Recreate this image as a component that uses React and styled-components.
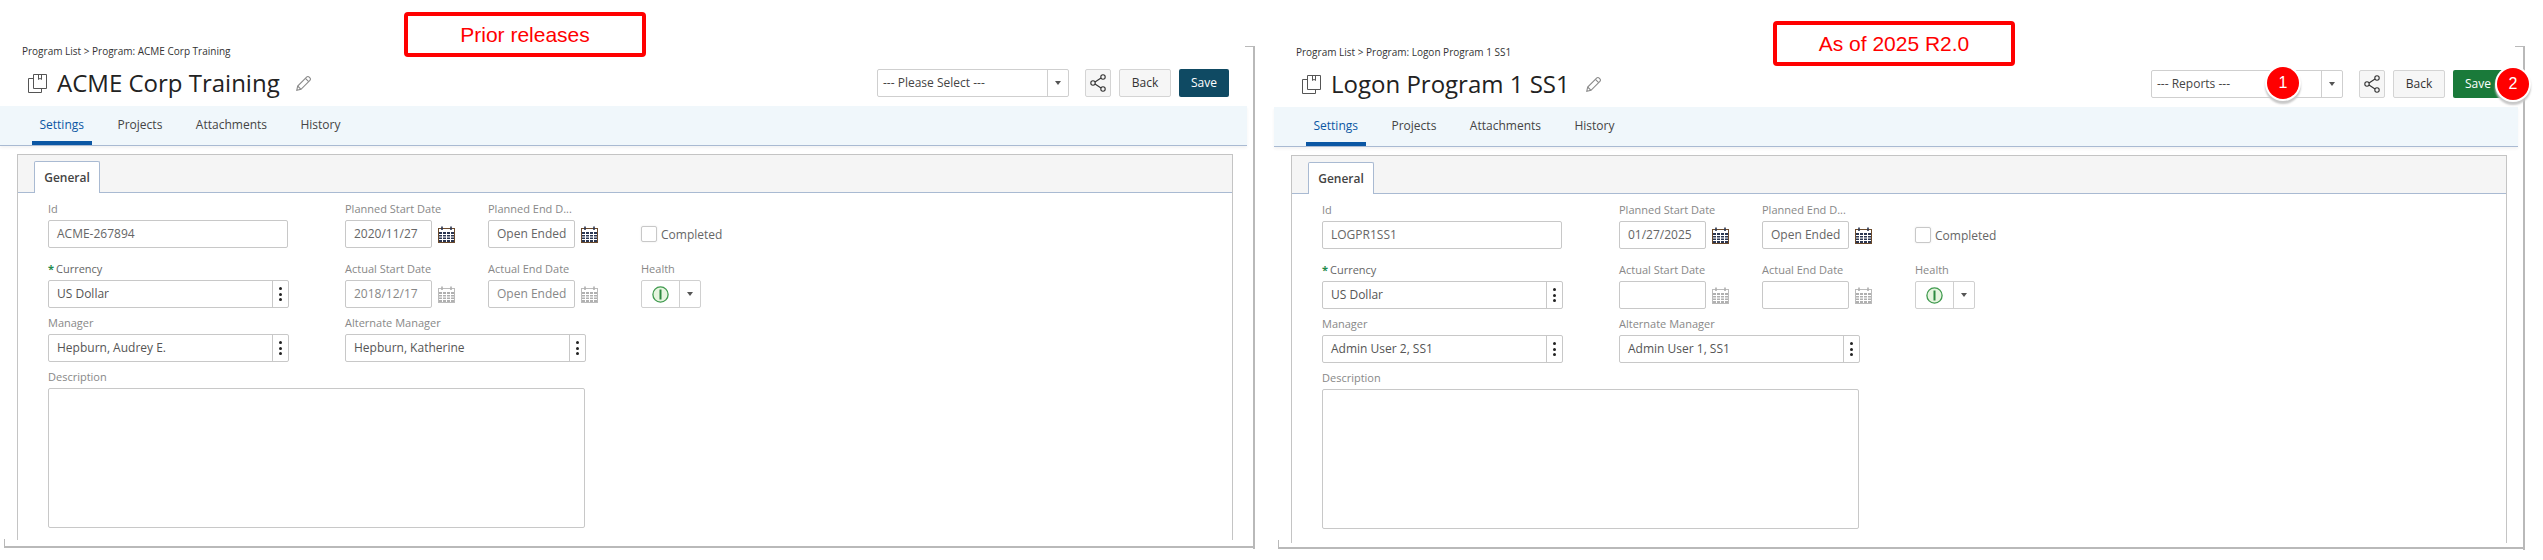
import styled, { createGlobalStyle } from 'styled-components'

const GlobalStyle = createGlobalStyle`
  html, body {
    margin: 0;
    padding: 0;
    background: #fff;
  }
  body {
    font-family: "Open Sans", "Liberation Sans", sans-serif;
    overflow: hidden;
  }
  * {
    box-sizing: border-box;
  }
`

function BookIcon() {
  return (
    <svg width="21" height="21" viewBox="0 0 21 21" fill="none" stroke="#555" strokeWidth="1">
      <path d="M6.5 1.5h13v14h-13z" />
      <path d="M6.5 5.5h-5v14h13v-4" />
      <path d="M11.5 1.5v5l1.5-1.2 1.5 1.2v-5" />
    </svg>
  )
}

function PencilIcon() {
  return (
    <svg width="17" height="17" viewBox="0 0 17 17" fill="none" stroke="#8a8a8a" strokeWidth="1.1">
      <path d="M1.8 15.2l.9-4.2L11.6 2.1a1.8 1.8 0 0 1 2.6 0l.7.7a1.8 1.8 0 0 1 0 2.6L6 14.3z" />
      <path d="M2.7 11l3.3 3.3M10.4 3.3l3.3 3.3" />
    </svg>
  )
}

function CalendarIcon({ muted }) {
  const ink = muted ? '#b0b0b0' : '#2a3550'
  const rim = muted ? '#bcbcbc' : '#6b4a2c'
  return (
    <svg width="17" height="17" viewBox="0 0 17 17" fill="none">
      <rect x="0.5" y="2.5" width="16" height="14" fill="#fff" stroke={rim} />
      <rect x="1" y="6" width="15" height="10" fill={ink} />
      <path d="M1 8.5h15M1 11h15M1 13.5h15M4.5 6v10M8.5 6v10M12.5 6v10" stroke="#fff" strokeWidth="1" />
      <path d="M4 0.5v3.5M13 0.5v3.5" stroke={ink} strokeWidth="1.6" />
    </svg>
  )
}

function ShareIcon() {
  return (
    <svg width="16" height="18" viewBox="0 0 16 18" fill="none" stroke="#333" strokeWidth="1.1">
      <circle cx="3" cy="9" r="2.2" />
      <circle cx="13" cy="3" r="2.2" />
      <circle cx="13" cy="15" r="2.2" />
      <path d="M5 8l6-4M5 10l6 4" />
    </svg>
  )
}

function HealthIcon() {
  return (
    <svg width="17" height="17" viewBox="0 0 17 17">
      <circle cx="8.5" cy="8.5" r="7.6" fill="#e6f5df" stroke="#3f9a4e" strokeWidth="1.3" />
      <rect x="7.5" y="3.5" width="2" height="10" fill="#2d8a40" />
    </svg>
  )
}

function Field({ label, required, children, span }) {
  return (
    <FieldBox $span={span}>
      <FieldLabel $required={required}>
        {required && <Star>*</Star>}
        {label}
      </FieldLabel>
      {children}
    </FieldBox>
  )
}

function Combo({ value }) {
  return (
    <ComboBox>
      <ComboValue>{value}</ComboValue>
      <Kebab>
        <i />
        <i />
        <i />
      </Kebab>
    </ComboBox>
  )
}

function DateField({ value, muted }) {
  return (
    <DateRow>
      <DateInput $muted={muted}>{value}</DateInput>
      <CalendarIcon muted={muted} />
    </DateRow>
  )
}

function ProgramPanel({ data }) {
  return (
    <Frame $width={data.frameWidth} $height={data.frameHeight} $pad={data.framePad}>
      <Inner $top={data.top}>
        <Breadcrumb>{data.crumb}</Breadcrumb>
        <HeaderRow $right={data.barInset}>
          <TitleWrap>
            <BookIcon />
            <Title>{data.title}</Title>
            <PencilIcon />
          </TitleWrap>
          <Toolbar>
            <SelectBox $width={data.selectWidth}>
              <SelectValue>{data.select}</SelectValue>
              <SelectArrow>
                <Caret />
              </SelectArrow>
            </SelectBox>
            <ShareButton>
              <ShareIcon />
            </ShareButton>
            <BackButton>Back</BackButton>
            <SaveButton $color={data.saveColor}>Save</SaveButton>
          </Toolbar>
        </HeaderRow>
        <TabBand>
          <TabLink $active>Settings</TabLink>
          <TabLink>Projects</TabLink>
          <TabLink>Attachments</TabLink>
          <TabLink>History</TabLink>
        </TabBand>
        <ContentBox $height={data.boxHeight}>
          <BoxHeader>
            <BoxTab>General</BoxTab>
          </BoxHeader>
          <FormGrid>
            <Field label="Id">
              <TextInput>{data.id}</TextInput>
            </Field>
            <Field label="Planned Start Date">
              <DateField value={data.plannedStart} />
            </Field>
            <Field label="Planned End D...">
              <DateField value="Open Ended" />
            </Field>
            <CheckRow>
              <CheckBox />
              Completed
            </CheckRow>

            <Field label="Currency" required>
              <Combo value="US Dollar" />
            </Field>
            <Field label="Actual Start Date">
              <DateField value={data.actualStart} muted />
            </Field>
            <Field label="Actual End Date">
              <DateField value={data.actualEnd} muted />
            </Field>
            <Field label="Health">
              <HealthBox>
                <HealthCell>
                  <HealthIcon />
                </HealthCell>
                <HealthArrow>
                  <Caret />
                </HealthArrow>
              </HealthBox>
            </Field>

            <Field label="Manager">
              <Combo value={data.manager} />
            </Field>
            <Field label="Alternate Manager" span={2}>
              <Combo value={data.altManager} />
            </Field>
            <Spacer />

            <Field label="Description" span={3}>
              <TextArea />
            </Field>
          </FormGrid>
        </ContentBox>
      </Inner>
    </Frame>
  )
}

const prior = {
  frameWidth: 1255,
  frameHeight: 502,
  framePad: 8,
  top: 0,
  barInset: 18,
  boxHeight: 386,
  selectWidth: 192,
  crumb: 'Program List > Program: ACME Corp Training',
  title: 'ACME Corp Training',
  select: '--- Please Select ---',
  saveColor: '#0f4a63',
  id: 'ACME-267894',
  plannedStart: '2020/11/27',
  actualStart: '2018/12/17',
  actualEnd: 'Open Ended',
  manager: 'Hepburn, Audrey E.',
  altManager: 'Hepburn, Katherine',
}

const current = {
  frameWidth: 1251,
  frameHeight: 503,
  framePad: 7,
  top: 1,
  barInset: 15,
  boxHeight: 388,
  selectWidth: 192,
  crumb: 'Program List > Program: Logon Program 1 SS1',
  title: 'Logon Program 1 SS1',
  select: '--- Reports ---',
  saveColor: '#1a7a3a',
  id: 'LOGPR1SS1',
  plannedStart: '01/27/2025',
  actualStart: '',
  actualEnd: '',
  manager: 'Admin User 2, SS1',
  altManager: 'Admin User 1, SS1',
}

function App() {
  return (
    <Page>
      <GlobalStyle />
      <ProgramPanel data={prior} />
      <ProgramPanel data={current} />
      <Callout $left={404} $top={12}>Prior releases</Callout>
      <Callout $left={1773} $top={21}>As of 2025 R2.0</Callout>
      <Badge $left={2267} $top={67}>1</Badge>
      <Badge $left={2497} $top={68}>2</Badge>
    </Page>
  )
}

const Page = styled.div`
  position: relative;
  display: flex;
  gap: 19px;
  width: 2543px;
  height: 560px;
  padding-top: 46px;
  background: #fff;
`

const Frame = styled.div`
  position: relative;
  flex: none;
  width: ${(p) => p.$width}px;
  height: ${(p) => p.$height}px;
  padding-right: ${(p) => p.$pad}px;

  &::before {
    content: '';
    position: absolute;
    top: 0;
    right: 0;
    width: 8px;
    height: 100%;
    border-top: 1px solid #b9b9b9;
    border-right: 2px solid #b9b9b9;
  }

  &::after {
    content: '';
    position: absolute;
    left: 4px;
    right: 0;
    bottom: 0;
    height: 7px;
    border-left: 1px solid #b9b9b9;
    border-bottom: 2px solid #b9b9b9;
  }
`

const Inner = styled.div`
  padding-top: ${(p) => p.$top}px;
`

const Breadcrumb = styled.div`
  height: 10px;
  padding-left: 22px;
  font-size: 10px;
  line-height: 10px;
  color: #333;
`

const HeaderRow = styled.div`
  display: flex;
  align-items: center;
  justify-content: space-between;
  height: 28px;
  margin: 13px 0 9px;
  padding: 0 ${(p) => p.$right}px 0 27px;
`

const TitleWrap = styled.div`
  display: flex;
  align-items: center;
`

const Title = styled.h1`
  margin: 0 15px 0 9px;
  font-size: 24px;
  font-weight: 400;
  line-height: 28px;
  color: #222;
  white-space: nowrap;
`

const Toolbar = styled.div`
  display: flex;
  align-items: stretch;
  height: 28px;
`

const SelectBox = styled.div`
  display: flex;
  width: ${(p) => p.$width}px;
  margin-right: 16px;
  background: #fff;
  border: 1px solid #cfcfcf;
  border-radius: 2px;
`

const SelectValue = styled.div`
  flex: 1;
  padding-left: 5px;
  font-size: 12px;
  line-height: 26px;
  color: #444;
`

const SelectArrow = styled.div`
  display: flex;
  align-items: center;
  justify-content: center;
  width: 21px;
  border-left: 1px solid #cfcfcf;
`

const Caret = styled.span`
  width: 0;
  height: 0;
  border-left: 3.5px solid transparent;
  border-right: 3.5px solid transparent;
  border-top: 4px solid #555;
`

const ShareButton = styled.div`
  display: flex;
  align-items: center;
  justify-content: center;
  width: 26px;
  margin-right: 8px;
  background: #f6f6f6;
  border: 1px solid #d4d4d4;
  border-radius: 2px;
`

const BackButton = styled.div`
  width: 52px;
  margin-right: 8px;
  font-size: 12px;
  line-height: 25px;
  text-align: center;
  color: #333;
  background: #f6f6f6;
  border: 1px solid #d4d4d4;
  border-radius: 2px;
`

const SaveButton = styled.div`
  width: 50px;
  font-size: 12px;
  line-height: 27px;
  text-align: center;
  color: #fff;
  background: ${(p) => p.$color};
  border-radius: 2px;
`

const TabBand = styled.div`
  display: flex;
  gap: 18.5px;
  height: 40px;
  padding-left: 32px;
  background: #f0f7fb;
  border-bottom: 1px solid #a9bad2;
  box-shadow: 0 2px 3px rgba(0, 0, 0, 0.05);
`

const TabLink = styled.div`
  height: 39px;
  padding: 0 7.5px;
  font-size: 12px;
  line-height: 38px;
  color: ${(p) => (p.$active ? '#0b57a4' : '#444')};
  border-bottom: 4px solid ${(p) => (p.$active ? '#0b57a4' : 'transparent')};
`

const ContentBox = styled.div`
  width: 1216px;
  height: ${(p) => p.$height}px;
  margin: 8px 0 0 17px;
  border: 1px solid #c4c4c4;
  border-bottom: none;
`

const BoxHeader = styled.div`
  display: flex;
  align-items: flex-end;
  height: 38px;
  padding-left: 16px;
  background: #f5f5f5;
  border-bottom: 1px solid #a9bad2;
`

const BoxTab = styled.div`
  width: 66px;
  height: 32px;
  margin-bottom: -1px;
  font-size: 12px;
  font-weight: 600;
  line-height: 32px;
  text-align: center;
  color: #444;
  background: #fff;
  border: 1px solid #a9bad2;
  border-bottom: none;
  border-radius: 2px 2px 0 0;
`

const FormGrid = styled.div`
  display: grid;
  grid-template-columns: 297px 143px 153px 1fr;
  grid-template-rows: 60px 54px 54px auto;
  padding: 10px 0 0 30px;
`

const FieldBox = styled.div`
  grid-column: span ${(p) => p.$span || 1};
`

const FieldLabel = styled.div`
  height: 12px;
  margin-bottom: 5px;
  font-size: 11px;
  line-height: 12px;
  color: ${(p) => (p.$required ? '#666' : '#888')};
  white-space: nowrap;
`

const Star = styled.span`
  margin-right: 2px;
  font-weight: 700;
  color: #1f8a4c;
`

const inputBase = `
  height: 28px;
  font-size: 12px;
  line-height: 26px;
  background: #fff;
  border: 1px solid #c8c8c8;
  border-radius: 2px;
`

const TextInput = styled.div`
  ${inputBase}
  width: 240px;
  padding-left: 8px;
  color: #666;
`

const ComboBox = styled.div`
  ${inputBase}
  display: flex;
  width: 241px;
`

const ComboValue = styled.div`
  flex: 1;
  padding-left: 8px;
  color: #555;
`

const Kebab = styled.div`
  display: flex;
  flex-direction: column;
  align-items: center;
  justify-content: center;
  gap: 2.5px;
  width: 16px;
  border-left: 1px solid #c8c8c8;

  i {
    width: 3px;
    height: 3px;
    border-radius: 50%;
    background: #222;
  }
`

const DateRow = styled.div`
  display: flex;
  align-items: center;
  gap: 6px;
`

const DateInput = styled.div`
  ${inputBase}
  width: 87px;
  padding-left: 8px;
  color: ${(p) => (p.$muted ? '#888' : '#666')};
  white-space: nowrap;
`

const CheckRow = styled.div`
  display: flex;
  align-items: center;
  gap: 4px;
  height: 28px;
  margin-top: 17px;
  font-size: 12px;
  color: #666;
`

const CheckBox = styled.span`
  width: 16px;
  height: 16px;
  background: #fff;
  border: 1px solid #c8c8c8;
  border-radius: 2px;
  box-shadow: 0 0 2px rgba(0, 0, 0, 0.1);
`

const HealthBox = styled.div`
  display: flex;
  width: 60px;
  height: 28px;
  border: 1px solid #d0d0d0;
  border-radius: 2px;
`

const HealthCell = styled.div`
  display: flex;
  align-items: center;
  justify-content: center;
  width: 37px;
`

const HealthArrow = styled.div`
  display: flex;
  align-items: center;
  justify-content: center;
  flex: 1;
  border-left: 1px solid #d0d0d0;
`

const Spacer = styled.div``

const TextArea = styled.div`
  width: 537px;
  height: 140px;
  background: #fff;
  border: 1px solid #c8c8c8;
  border-radius: 2px;
`

const Callout = styled.div`
  position: absolute;
  left: ${(p) => p.$left}px;
  top: ${(p) => p.$top}px;
  width: 242px;
  height: 45px;
  font-family: "Liberation Sans", Arial, sans-serif;
  font-size: 21px;
  line-height: 38px;
  text-align: center;
  color: #f00;
  background: #fff;
  border: 4px solid #f00;
  border-radius: 4px;
`

const Badge = styled.div`
  position: absolute;
  left: ${(p) => p.$left}px;
  top: ${(p) => p.$top}px;
  width: 32px;
  height: 32px;
  font-family: "Liberation Sans", Arial, sans-serif;
  font-size: 16px;
  line-height: 32px;
  text-align: center;
  color: #fff;
  background: #f00;
  border-radius: 50%;
  box-shadow: 0 0 0 2px #fff, 0 3px 2px 2px #c8c8c8;
`

export default App
